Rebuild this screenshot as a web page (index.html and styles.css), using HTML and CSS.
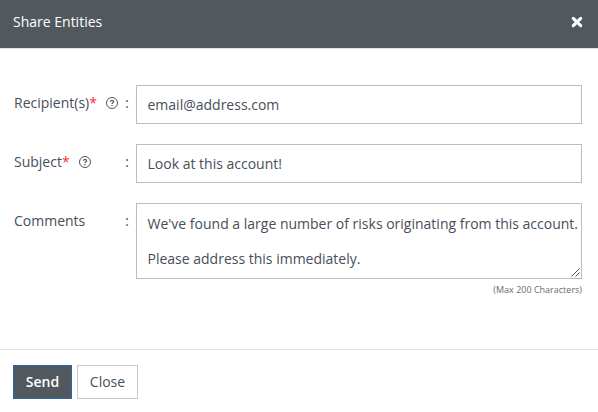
FILE: index.html
```html
<!DOCTYPE html>
<html lang="en">
<head>
<meta charset="utf-8">
<title>Share Entities</title>
<link rel="stylesheet" href="styles.css">
</head>
<body>
<div class="dialog">
  <header class="header">
    <h1 class="title">Share Entities</h1>
    <button class="close" aria-label="Close"><svg width="12" height="12" viewBox="0 0 12 12"><path d="M2.300 2.300l7.400 7.400M9.700 2.300l-7.400 7.400" stroke="#fff" stroke-width="3.100" stroke-linecap="round"/></svg></button>
  </header>
  <main class="form">
    <div class="row">
      <div class="label"><span>Recipient(s)<b class="required">*</b></span><svg class="help" width="12" height="12" viewBox="0 0 12 12"><circle cx="6" cy="6" r="5.5"/><path class="mark" d="M4.500 4.700c0-1.900 3.100-1.900 3.100 0C7.600 5.800 6 5.700 6 7M6 8v1.300"/></svg><span class="colon">:</span></div>
      <div class="field">email@address.com</div>
    </div>
    <div class="row">
      <div class="label"><span>Subject<b class="required">*</b></span><svg class="help" width="12" height="12" viewBox="0 0 12 12"><circle cx="6" cy="6" r="5.5"/><path class="mark" d="M4.500 4.700c0-1.900 3.100-1.900 3.100 0C7.600 5.800 6 5.700 6 7M6 8v1.300"/></svg><span class="colon">:</span></div>
      <div class="field">Look at this account!</div>
    </div>
    <div class="row comments">
      <div class="label"><span>Comments</span><span class="colon">:</span></div>
      <div class="field area"><p>We've found a large number of risks originating from this account.</p><p>Please address this immediately.</p><svg class="grip" width="9" height="9" viewBox="0 0 9 9"><path d="M0.500 8.500L8.500 0.500M4.500 8.500L8.500 4.500"/></svg></div>
    </div>
    <div class="hint">(Max 200 Characters)</div>
  </main>
  <footer class="footer"><button class="btn send">Send</button><button class="btn cancel">Close</button></footer>
</div>
</body>
</html>
```
FILE: styles.css
```css
* { box-sizing: border-box; }
body { margin: 0; background: #fff; color: #484e5a; font: 14px/20px "Open Sans", sans-serif; }
.dialog { height: 412px; display: flex; flex-direction: column; }
.header { flex: none; height: 49px; padding: 0 15px 4px 13px; background: #51585e; border-bottom: 1px solid #e2e3e4; display: flex; align-items: center; justify-content: space-between; }
.title { margin: 0; color: #fff; font-size: 14px; font-weight: 400; }
.close { border: 0; padding: 0; background: none; display: flex; }
.form { flex: none; height: 300px; padding: 36px 16px 0 14px; }
.row { display: flex; height: 39px; margin-bottom: 20px; }
.label { width: 122px; height: 36px; display: flex; align-items: center; }
.required { color: #ff2b2b; font-weight: 400; }
.help { margin-left: 9px; fill: none; stroke: #50555b; stroke-width: 1; }
.mark { stroke-width: 1.2; }
.colon { margin-left: auto; margin-right: 7px; }
.field { flex: 1; border: 1px solid #bbbcbd; padding: 9px 0 0 10.5px; white-space: nowrap; }
.comments { height: 76px; margin-bottom: 4px; }
.area { position: relative; padding-top: 2px; line-height: 35px; }
.area p { margin: 0; }
.grip { position: absolute; right: 1px; bottom: 1px; stroke: #555; fill: none; }
.hint { color: #686b70; font-size: 9px; line-height: 14px; text-align: right; }
.footer { flex: 1; border-top: 1px solid #e1e2e3; padding: 15px 13px 0; display: flex; gap: 5px; align-items: flex-start; }
.btn { height: 34px; border: 1px solid #c8c9ca; padding: 0; font: inherit; color: #484e5a; background: #fff; }
.send { width: 59px; font-weight: 600; color: #fff; background: #51585e; border-color: #2b689f; }
.cancel { width: 61px; }
```
